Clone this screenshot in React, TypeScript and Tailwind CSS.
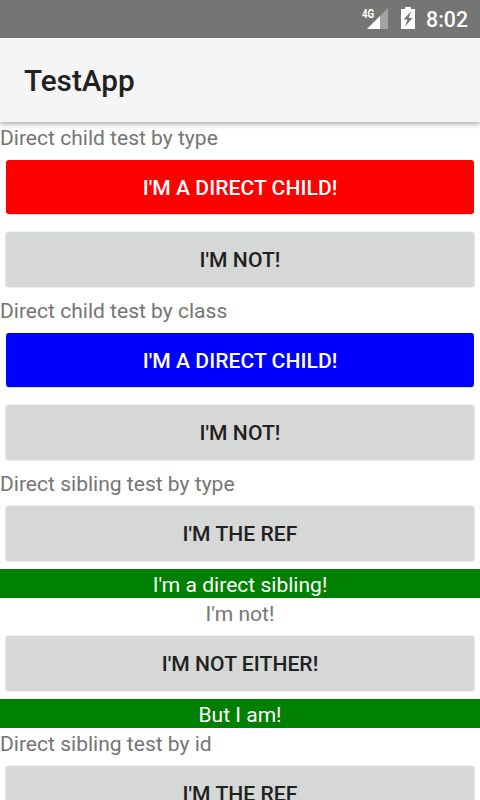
import type { ReactNode } from 'react';

function Label({ children }: { children: ReactNode }) {
  return <div className="h-[29px] whitespace-nowrap text-[21.05px] leading-[32px] text-[#757575]">{children}</div>;
}

function Btn({ children, tone }: { children: ReactNode; tone?: 'red' | 'blue' }) {
  const color =
    tone === 'red'
      ? 'bg-[#ff0000] text-white shadow-[0_1px_1px_rgba(0,0,0,0.14)]'
      : tone === 'blue'
        ? 'bg-[#0000ff] text-white shadow-[0_1px_1px_rgba(0,0,0,0.14)]'
        : 'bg-[#d6d7d7] text-[#212121] shadow-[0_1px_0_0_#d6d7d7,0_1px_0_1px_rgba(214,215,215,0.45),0_0_0_1px_rgba(214,215,215,0.3)]';
  return (
    <div className="h-[72px] px-[6px] py-[9px]">
      <div className={`flex h-[54px] items-center justify-center rounded-[3px] pt-[2px] text-[21.1px] tracking-[0.04px] font-medium ${color}`}>
        {children}
      </div>
    </div>
  );
}

function Line({ children, green }: { children: ReactNode; green?: boolean }) {
  return (
    <div className={`h-[29px] text-center text-[21.05px] leading-[32px] ${green ? 'bg-[#008000] text-white' : 'text-[#757575]'}`}>{children}</div>
  );
}

export default function App() {
  return (
    <div className="h-[800px] w-[480px] overflow-hidden bg-white font-[Roboto,sans-serif]">
      <header className="flex h-[38px] items-center justify-end bg-[#757575] pr-3 text-white">
        <svg className="mr-[11px]" width="27" height="24" viewBox="0 0 27 24">
          <path d="M26 1V22H5Z" fill="#a3a3a3" />
          <path d="M18 9V22H5Z" fill="#fff" />
          <text transform="scale(0.72 1)" x="0" y="11" fontSize="13.5" fontWeight="700" fill="#fff">4G</text>
        </svg>
        <svg className="mr-[10px]" width="16" height="24" viewBox="0 0 16 24">
          <path d="M5 0h6v2h4v20H1V2h4z" fill="#fff" />
          <path d="M11 4.5L3.500 12.500h4L5 19.500L12.500 11H8.700Z" fill="#757575" />
        </svg>
        <span className="pt-[2px] text-[21.3px] font-medium">8:02</span>
      </header>
      <div className="relative flex h-[84px] items-center bg-[#f5f5f5] pl-6 pt-[2px] text-[29.7px] font-medium text-[#212121] shadow-[0_2px_5px_rgba(0,0,0,0.35)] [clip-path:inset(0_0_-8px_0)]">TestApp</div>
      <main>
        <Label>Direct child test by type</Label>
        <Btn tone="red">I'M A DIRECT CHILD!</Btn>
        <Btn>I'M NOT!</Btn>
        <Label>Direct child test by class</Label>
        <Btn tone="blue">I'M A DIRECT CHILD!</Btn>
        <Btn>I'M NOT!</Btn>
        <Label>Direct sibling test by type</Label>
        <Btn>I'M THE REF</Btn>
        <Line green>I'm a direct sibling!</Line>
        <Line>I'm not!</Line>
        <Btn>I'M NOT EITHER!</Btn>
        <Line green>But I am!</Line>
        <Label>Direct sibling test by id</Label>
        <Btn>I'M THE REF</Btn>
      </main>
    </div>
  );
}
